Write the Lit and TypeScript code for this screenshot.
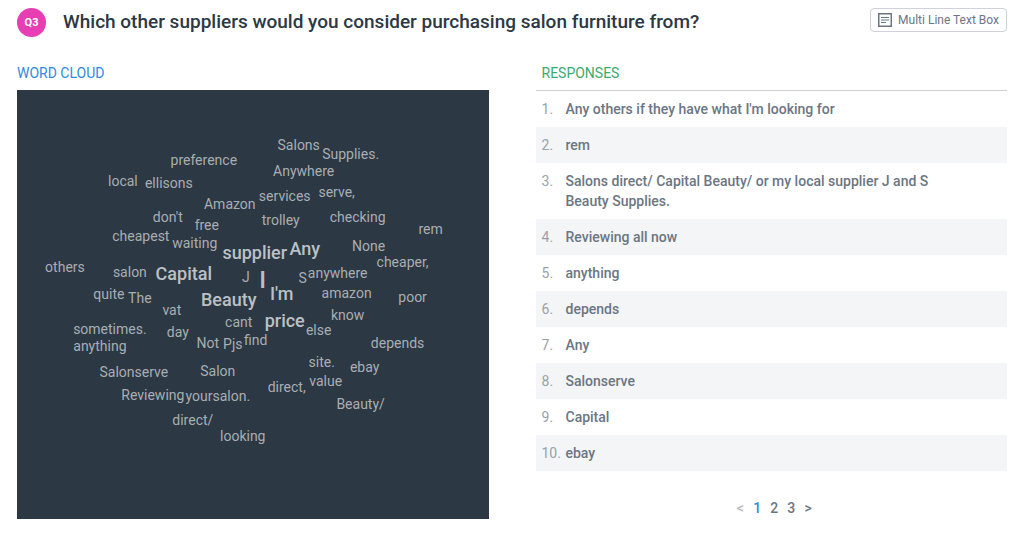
import { LitElement, html, css } from "lit";
import { customElement, property, state } from "lit/decorators.js";
import { classMap } from "lit/directives/class-map.js";

type Size = "small" | "big" | "huge";
type Word = { text: string; x: number; y: number; size: Size };

/* Word centres on a 472 x 429 canvas. */
const CANVAS = { width: 472, height: 429 };
const w = (text: string, x: number, y: number, size: Size = "small"): Word => ({ text, x, y, size });

const WORDS: Word[] = [
  w("Salons", 282, 55),
  w("Supplies.", 334, 64),
  w("preference", 187, 70),
  w("Anywhere", 287, 81),
  w("local", 106, 91),
  w("ellisons", 152, 93),
  w("services", 268, 106),
  w("serve,", 320, 102),
  w("Amazon", 213, 114),
  w("don't", 151, 127),
  w("free", 190, 135),
  w("trolley", 264, 130),
  w("checking", 341, 127),
  w("rem", 414, 139),
  w("cheapest", 124, 146),
  w("waiting", 178, 153),
  w("supplier", 238, 163, "big"),
  w("Any", 288, 159, "big"),
  w("None", 352, 156),
  w("cheaper,", 386, 172),
  w("others", 48, 177),
  w("salon", 113, 182),
  w("Capital", 167, 184, "big"),
  w("J", 229, 187),
  w("I", 246, 190, "huge"),
  w("S", 286, 188),
  w("anywhere", 321, 183),
  w("quite", 92, 204),
  w("The", 123, 208),
  w("vat", 155, 220),
  w("Beauty", 212, 210, "big"),
  w("I'm", 265, 204, "big"),
  w("amazon", 330, 203),
  w("poor", 396, 207),
  w("cant", 222, 232),
  w("price", 268, 231, "big"),
  w("else", 302, 240),
  w("know", 331, 225),
  w("sometimes.", 93, 239),
  w("day", 161, 242),
  w("anything", 83, 256),
  w("Not", 191, 253),
  w("Pjs", 216, 254),
  w("find", 239, 250),
  w("depends", 381, 253),
  w("site.", 305, 272),
  w("ebay", 348, 277),
  w("Salonserve", 117, 282),
  w("Salon", 201, 281),
  w("direct,", 270, 297),
  w("value", 309, 291),
  w("Reviewing", 136, 305),
  w("yoursalon.", 201, 306),
  w("Beauty/", 344, 314),
  w("direct/", 176, 330),
  w("looking", 226, 346),
];

const RESPONSES = [
  "Any others if they have what I'm looking for",
  "rem",
  "Salons direct/ Capital Beauty/ or my local supplier J and S Beauty Supplies.",
  "Reviewing all now",
  "anything",
  "depends",
  "Any",
  "Salonserve",
  "Capital",
  "ebay",
];

@customElement("word-cloud")
class WordCloud extends LitElement {
  @property({ attribute: false }) words: Word[] = [];

  static styles = css`
    :host {
      display: block;
    }
    .canvas {
      position: relative;
      aspect-ratio: 472 / 429;
      background: #2c3844;
      color: #a9aeb3;
      overflow: hidden;
    }
    .word {
      position: absolute;
      transform: translate(-50%, -50%);
      font-size: 14px;
      line-height: 18px;
      white-space: nowrap;
    }
    .big,
    .huge {
      font-size: 18px;
      line-height: 24px;
      font-weight: 500;
      color: #bcc0c4;
    }
    .huge {
      font-size: 24px;
    }
  `;

  render() {
    return html`<div class="canvas">
      ${this.words.map(
        (word) => html`<span
          class=${classMap({ word: true, [word.size]: true })}
          style="left:${(word.x / CANVAS.width) * 100}%;top:${(word.y / CANVAS.height) * 100}%"
          >${word.text}</span
        >`
      )}
    </div>`;
  }
}

@customElement("page-nav")
class PageNav extends LitElement {
  @property({ type: Number }) pages = 1;
  @state() private current = 1;

  static styles = css`
    .nav {
      display: flex;
      justify-content: center;
      gap: 1px;
      padding-left: 6px;
    }
    .step {
      width: 16px;
      padding: 0;
      border: 0;
      background: none;
      font: 500 14px/20px Roboto, sans-serif;
      color: #6b7683;
      cursor: pointer;
    }
    .active {
      color: #2f8ae0;
    }
    .step:disabled {
      color: #b4b8bd;
      cursor: default;
    }
  `;

  private go(page: number) {
    this.current = page;
  }

  render() {
    const pages = Array.from({ length: this.pages }, (_, i) => i + 1);
    return html`<nav class="nav" aria-label="Pages">
      <button class="step" ?disabled=${this.current === 1} @click=${() => this.go(this.current - 1)}>&lt;</button>
      ${pages.map(
        (page) => html`<button
          class=${classMap({ step: true, active: page === this.current })}
          @click=${() => this.go(page)}
        >${page}</button>`
      )}
      <button class="step" ?disabled=${this.current === this.pages} @click=${() => this.go(this.current + 1)}>&gt;</button>
    </nav>`;
  }
}

@customElement("app-root")
class AppRoot extends LitElement {
  static styles = css`
    :host {
      display: block;
      padding: 8px 17px 24px;
      background: #fff;
      font-family: Roboto, sans-serif;
      color: #6b7683;
    }
    .header {
      display: flex;
      align-items: flex-start;
      gap: 17px;
    }
    .badge {
      flex: none;
      width: 29px;
      height: 29px;
      border-radius: 50%;
      background: #e63fb4;
      color: #fff;
      font-size: 11px;
      font-weight: 700;
      line-height: 29px;
      text-align: center;
    }
    .title {
      flex: 1;
      margin: 0;
      font-size: 19px;
      font-weight: 500;
      line-height: 28px;
      color: #2c3844;
    }
    .type {
      display: flex;
      align-items: center;
      gap: 6px;
      height: 24px;
      padding: 0 7px;
      border: 1px solid #cfd2da;
      border-radius: 4px;
      background: #fff;
      color: #6b7683;
      font: 400 12px/16px Roboto, sans-serif;
      white-space: nowrap;
    }
    .icon {
      flex: none;
      width: 14px;
      height: 14px;
    }
    .columns {
      display: grid;
      grid-template-columns: 1fr 1fr;
      gap: 47px;
      align-items: start;
      margin-top: 26px;
    }
    .heading {
      margin: 0;
      padding-bottom: 7px;
      font-size: 14px;
      font-weight: 400;
      line-height: 20px;
    }
    .blue {
      color: #2f8ae0;
    }
    .green {
      padding-left: 6px;
      color: #3aab6b;
    }
    .list {
      margin: 0 0 27px;
      padding: 0;
      border-top: 1px solid #cdd0d3;
      list-style: none;
    }
    .row {
      display: grid;
      grid-template-columns: 24px 1fr;
      padding: 8px 64px 8px 6px;
      font-size: 14px;
      font-weight: 500;
      line-height: 20px;
    }
    .row:nth-child(even) {
      background: #f4f5f7;
    }
    .number {
      font-weight: 400;
      color: #9aa1aa;
    }
  `;

  render() {
    return html`
      <header class="header">
        <span class="badge">Q3</span>
        <h1 class="title">Which other suppliers would you consider purchasing salon furniture from?</h1>
        <button class="type" type="button">
          <svg class="icon" viewBox="0 0 14 14" fill="none" stroke="#6b7683" aria-hidden="true">
            <rect x="0.75" y="0.75" width="12.5" height="12.5" stroke-width="1.5" />
            <path d="M3 4.5h8M3 7h8M3 9.5h5" stroke-width="1.2" />
          </svg>
          Multi Line Text Box
        </button>
      </header>
      <main class="columns">
        <section>
          <h2 class="heading blue">WORD CLOUD</h2>
          <word-cloud .words=${WORDS}></word-cloud>
        </section>
        <section>
          <h2 class="heading green">RESPONSES</h2>
          <ol class="list">
            ${RESPONSES.map(
              (text, i) => html`<li class="row"><span class="number">${i + 1}.</span><span>${text}</span></li>`
            )}
          </ol>
          <page-nav pages="3"></page-nav>
        </section>
      </main>
    `;
  }
}
